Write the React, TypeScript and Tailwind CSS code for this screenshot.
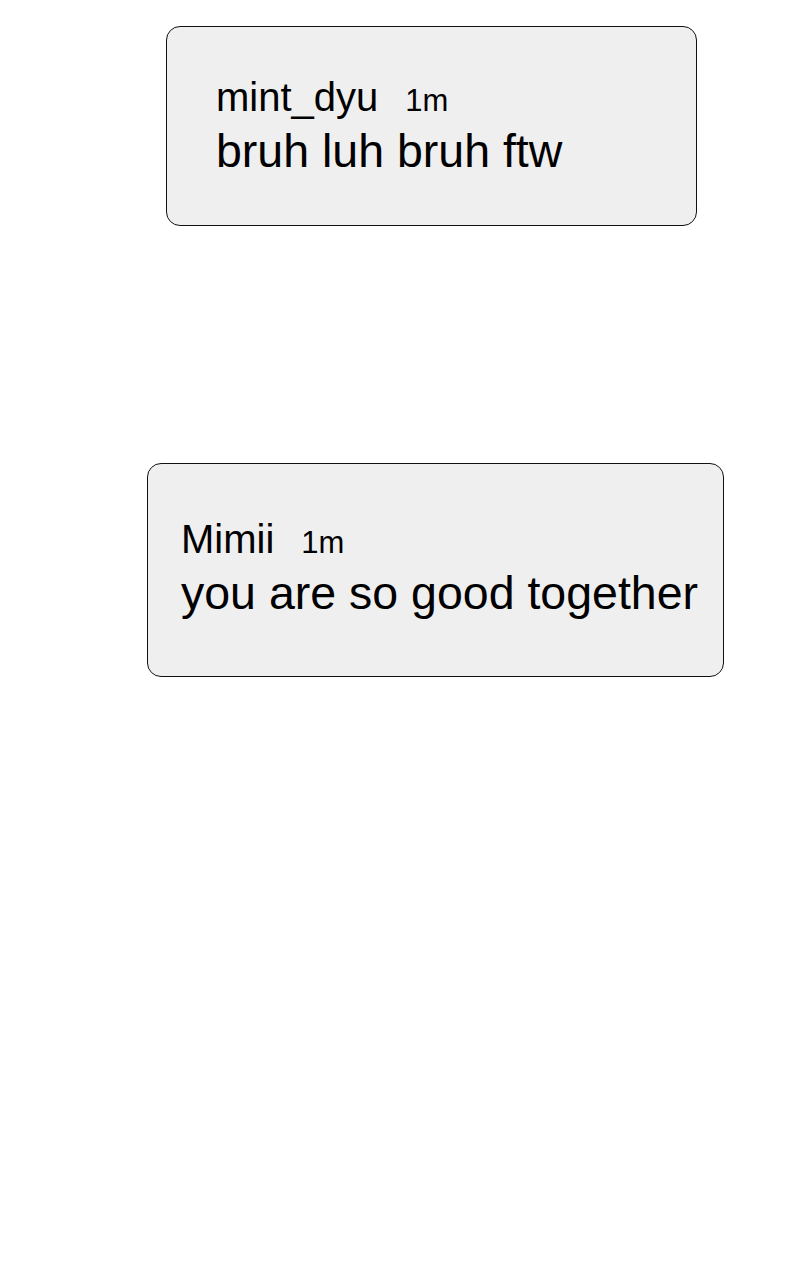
type Comment = {
  user: string;
  time: string;
  text: string;
  box: string;
};

const comments: Comment[] = [
  {
    user: 'mint_dyu',
    time: '1m',
    text: 'bruh luh bruh ftw',
    box: 'mt-[26px] ml-[166px] w-[531px] h-[200px] pt-[50px] pl-[49px]',
  },
  {
    user: 'Mimii',
    time: '1m',
    text: 'you are so good together',
    box: 'mt-[237px] ml-[147px] w-[577px] h-[214px] pt-[55px] pl-[33px]',
  },
];

const CommentCard = ({ c }: { c: Comment }) => (
  <div className={`${c.box} rounded-[14px] border border-[#111] bg-[#efefef] text-black`}>
    <div className="flex items-baseline gap-[27px]">
      <span className="text-[40px] leading-[40px]">{c.user}</span>
      <span className="text-[31px] leading-[40px]">{c.time}</span>
    </div>
    <p className="mt-[7px] text-[46.5px] leading-[46px]">{c.text}</p>
  </div>
);

export default function App() {
  return (
    <div
      className="w-[800px] h-[1280px] bg-white flex flex-col"
      style={{ fontFamily: '"Liberation Sans", Arial, sans-serif' }}
    >
      {comments.map((c) => (
        <CommentCard key={c.user} c={c} />
      ))}
    </div>
  );
}
